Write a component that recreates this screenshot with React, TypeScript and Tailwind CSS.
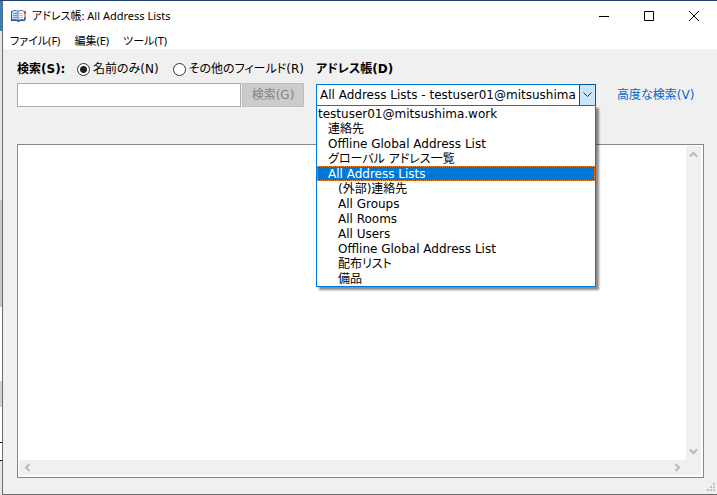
import React, { useState } from 'react';

const addressLists = [
    { id: 'account', label: 'testuser01@mitsushima.work', level: 0 },
    { id: 'contacts', label: '連絡先', level: 1 },
    { id: 'offline', label: 'Offline Global Address List', level: 1 },
    { id: 'global', label: 'グローバル アドレス一覧', level: 1 },
    { id: 'all', label: 'All Address Lists', level: 1 },
    { id: 'external', label: '(外部)連絡先', level: 2 },
    { id: 'groups', label: 'All Groups', level: 2 },
    { id: 'rooms', label: 'All Rooms', level: 2 },
    { id: 'users', label: 'All Users', level: 2 },
    { id: 'offline-all', label: 'Offline Global Address List', level: 2 },
    { id: 'distribution', label: '配布リスト', level: 2 },
    { id: 'equipment', label: '備品', level: 2 },
];

const indent = ['pl-px', 'pl-[11px]', 'pl-[21px]'];

function BookIcon() {
    return (
        <svg width="16" height="14" viewBox="0 0 16 14" aria-hidden="true">
            <path d="M0 2h14v10H9l-1 1H7l-1-1H0z" fill="#2d5596" />
            <path d="M1 2.500C2.500 1 5.500 1 7 2.500V11C5.500 10 3 10 1 10.500z" fill="#c9dcf5" />
            <path d="M13 2.500C11.500 1 8.500 1 7 2.500V11c1.500-1 4-1 6-.5z" fill="#f4f8fe" />
            <path d="M1 2.500C2.500 1 5.500 1 7 2.500 8.500 1 11.500 1 13 2.500M7 2.500V11" stroke="#4a74b4" fill="none" />
            <path d="M2 4.500h4M2 6.500h4M2 8.500h4" stroke="#6c97d3" />
            <path d="M8.500 4.500h3M8.500 6.500h3M8.500 8.500h3" stroke="#a5c0e6" />
            <path d="M13 2h2v3h-2z" fill="#d9443a" />
            <path d="M13 5h2v3h-2z" fill="#f0b43c" />
            <path d="M13 8h2v3h-2z" fill="#3f78c8" />
        </svg>
    );
}

function TitleBar() {
    return (
        <header className="flex h-[30px] items-center bg-white pl-2">
            <BookIcon />
            <h1 className="ml-[5px] flex-1 text-[11px] leading-4">アドレス帳: All Address Lists</h1>
            <button type="button" aria-label="最小化" className="flex h-full w-[45px] items-center justify-center">
                <svg width="10" height="10"><path d="M0 5.500h10" stroke="#000" /></svg>
            </button>
            <button type="button" aria-label="最大化" className="flex h-full w-[45px] items-center justify-center">
                <svg width="10" height="10"><path d="M.5.500h9v9h-9z" fill="none" stroke="#000" /></svg>
            </button>
            <button type="button" aria-label="閉じる" className="flex h-full w-[46px] items-center justify-center">
                <svg width="10" height="10"><path d="M0 0l10 10M10 0L0 10" stroke="#000" /></svg>
            </button>
        </header>
    );
}

function MenuBar() {
    return (
        <nav className="flex h-[18px] items-end gap-[14px] bg-white pl-[7px] text-[11px] leading-4">
            <button type="button">ファイル(F)</button>
            <button type="button">編集(E)</button>
            <button type="button">ツール(T)</button>
        </nav>
    );
}

function Radio({ label, checked, onChange }: { label: string; checked: boolean; onChange: () => void }) {
    return (
        <label className="flex items-center gap-[3px] whitespace-nowrap">
            <input
                type="radio"
                name="scope"
                checked={checked}
                onChange={onChange}
                className="h-[13px] w-[13px] shrink-0 appearance-none rounded-full border border-[#333] bg-white checked:bg-[radial-gradient(circle,#222_3px,#fff_4px)]"
            />
            {label}
        </label>
    );
}

function AddressBookPicker() {
    const [selected, setSelected] = useState('all');
    return (
        <div className="relative h-[22px] border border-[#0078d7] bg-white">
            <select
                id="book"
                defaultValue="all"
                className="block h-5 w-full appearance-none overflow-hidden bg-white pr-[18px] pl-[3px] leading-5 whitespace-nowrap outline-none"
            >
                <option value="all">All Address Lists - testuser01@mitsushima.work</option>
            </select>
            <span className="pointer-events-none absolute -top-px -right-px flex h-[22px] w-[17px] items-center justify-center border border-[#005499] bg-[#cce4f7]">
                <svg width="9" height="6" fill="none"><path d="M.5.500l4 4 4-4" stroke="#333" /></svg>
            </span>
            <ul
                role="listbox"
                aria-label="アドレス帳"
                className="absolute top-5 -right-px -left-px z-10 border border-[#0078d7] bg-white shadow-[3px_3px_2px_rgba(0,0,0,0.45)]"
            >
                {addressLists.map((list) => (
                    <li
                        key={list.id}
                        role="option"
                        aria-selected={list.id === selected}
                        onClick={() => setSelected(list.id)}
                        className={`h-[15px] leading-[17px] whitespace-nowrap ${indent[list.level]} ${list.id === selected ? 'bg-[#0078d7] text-white outline-1 -outline-offset-1 outline-dotted outline-[#ff8728]' : ''}`}
                    >
                        {list.label}
                    </li>
                ))}
            </ul>
        </div>
    );
}

function Chevron({ d }: { d: string }) {
    return (
        <svg width="9" height="9" fill="none" aria-hidden="true">
            <path d={d} stroke="#b8b8b8" strokeWidth="2" />
        </svg>
    );
}

function ResultList() {
    return (
        <section aria-label="検索結果" className="grid flex-1 grid-cols-[1fr_15px] grid-rows-[1fr_15px] border border-[#828790] bg-white pt-px pr-[2px] pb-[2px] pl-px">
            <div />
            <div className="flex flex-col items-center justify-between bg-[#f0f0f0] py-1">
                <Chevron d="M1 6.500l3.500-3.500L8 6.500" />
                <Chevron d="M1 2.500L4.500 6 8 2.500" />
            </div>
            <div className="flex items-center justify-between bg-[#f0f0f0] px-1">
                <Chevron d="M6.500 1L3 4.500 6.500 8" />
                <Chevron d="M2.500 1L6 4.500 2.500 8" />
            </div>
            <div className="bg-[#f0f0f0]" />
        </section>
    );
}

// sliver of the window that sits behind the dialog
function BehindWindow() {
    return (
        <div className="flex w-[2px] shrink-0 flex-col bg-[#e6e6e6]">
            <div className="h-[30px] bg-[#2b84c8]" />
            <div className="h-[170px] border-b border-[#c6c6c6]" />
            <div className="h-[106px] bg-[#c8c8c8]" />
            <div className="h-[74px] bg-white" />
            <div className="h-[26px] bg-[#d2d2d2]" />
            <div className="h-[36px] border-b border-black bg-white" />
            <div className="h-[18px] border-b border-black bg-white" />
        </div>
    );
}

export default function App() {
    const [scope, setScope] = useState('name');
    return (
        <div className="flex min-h-screen border-t border-[#1e3f66] font-['Noto_Sans','Noto_Sans_CJK_JP',sans-serif] text-black [font-feature-settings:'palt']">
            <BehindWindow />
            <div className="relative flex min-w-0 flex-1 flex-col border-b border-l border-[#6b6b6b] bg-[#f0f0f0]">
                <TitleBar />
                <MenuBar />
                <main className="flex flex-1 flex-col pt-3 pr-[13px] pb-4 pl-[14px] font-['DejaVu_Sans','Noto_Sans_CJK_JP',sans-serif] text-[12px] leading-4">
                    <form className="mb-[37px] flex" onSubmit={(e) => e.preventDefault()}>
                        <div className="w-[287px]">
                            <div className="flex h-4 items-center">
                                <label htmlFor="query" className="w-[60px] shrink-0 font-bold whitespace-nowrap">検索(S):</label>
                                <div className="flex gap-[14px]">
                                    <Radio label="名前のみ(N)" checked={scope === 'name'} onChange={() => setScope('name')} />
                                    <Radio label="その他のフィールド(R)" checked={scope === 'other'} onChange={() => setScope('other')} />
                                </div>
                            </div>
                            <div className="mt-[6px] flex gap-px">
                                <input id="query" type="text" className="h-6 min-w-0 flex-1 border border-[#abadb3] bg-white px-1 outline-none" />
                                <button type="button" disabled className="h-6 w-[62px] border border-[#bfbfbf] bg-[#cccccc] text-[#838383]">検索(G)</button>
                            </div>
                        </div>
                        <div className="ml-3 w-[280px]">
                            <label htmlFor="book" className="mb-[7px] block font-bold">アドレス帳(D)</label>
                            <AddressBookPicker />
                        </div>
                        <a href="#advanced" className="mt-[26px] ml-[21px] whitespace-nowrap text-[#0066cc]">高度な検索(V)</a>
                    </form>
                    <ResultList />
                </main>
                <svg width="11" height="11" className="absolute right-0 bottom-0" fill="#bfbfbf" aria-hidden="true">
                    <path d="M7 0h2v2H7zM4 3h2v2H4zM7 3h2v2H7zM1 6h2v2H1zM4 6h2v2H4zM7 6h2v2H7z" />
                </svg>
            </div>
        </div>
    );
}
